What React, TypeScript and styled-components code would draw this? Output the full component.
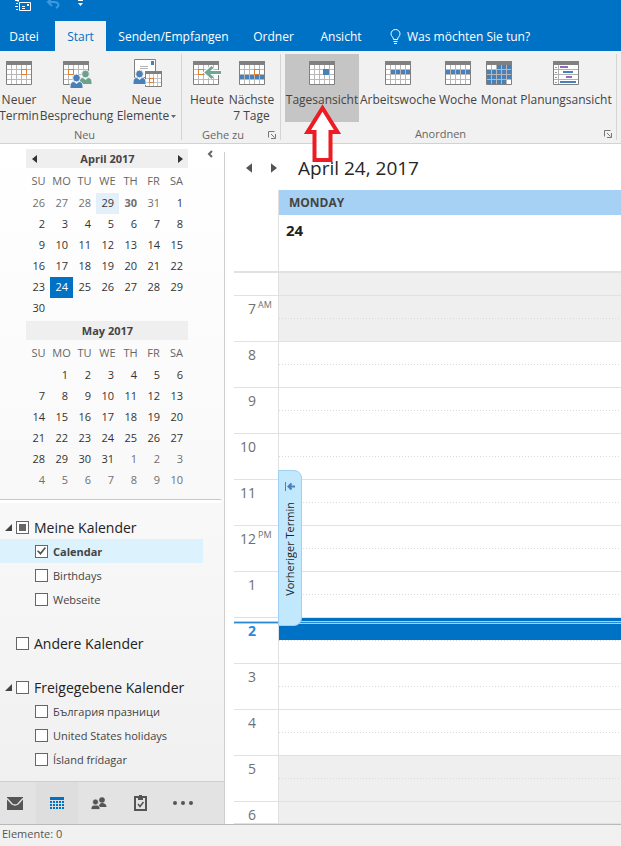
import React from "react";
import styled, { createGlobalStyle } from "styled-components";

const GlobalStyle = createGlobalStyle`
  * { box-sizing: border-box; }
  body { margin: 0; background: #fff; }
  body, button, input { font-family: "Open Sans", "Noto Sans", sans-serif; }
  button { border: 0; padding: 0; background: none; color: inherit; cursor: pointer; }
  svg { display: block; flex: none; }
`;

const line = "#e1e1e1";
const blue = "#0072c6";

/* ---------- Shell ---------- */

const Window = styled.div`
  position: relative;
  display: flex;
  flex-direction: column;
  height: 100vh;
  overflow: hidden;
  font-size: 12px;
  color: #444;
`;

const TitleBar = styled.header`
  flex: none;
  background: ${blue};
  color: #fff;
`;

const QuickAccess = styled.div`
  display: flex;
  gap: 14px;
  height: 21px;
  padding-left: 14px;
  overflow: hidden;
`;

const TabStrip = styled.nav`
  display: flex;
  height: 30px;
  white-space: nowrap;
`;

const Tab = styled.button<{ $active?: boolean; $width: number }>`
  flex: 0 0 ${(p) => p.$width}px;
  padding-right: 7px;
  padding-left: ${(p) => (p.$active ? 7 : 0)}px;
  font-size: 12px;
  text-align: center;
  color: ${(p) => (p.$active ? blue : "#fff")};
  background: ${(p) => (p.$active ? "#f1f1f1" : "transparent")};
  & ~ & { padding-left: 7px; }
`;

const TellMe = styled.button`
  display: flex;
  align-items: center;
  gap: 6px;
  padding-left: 14px;
  font-size: 12px;
`;

const Ribbon = styled.section`
  flex: none;
  display: flex;
  background: #f1f1f1;
  border-bottom: 1px solid #d2d2d2;
  height: 93px;
  padding: 3px 0;
  white-space: nowrap;
`;

const Group = styled.div<{ $width: number; $pad: number }>`
  flex: 0 0 ${(p) => p.$width}px;
  display: flex;
  flex-direction: column;
  border-right: 1px solid #d4d4d4;
  padding-left: ${(p) => p.$pad}px;
`;

const GroupButtons = styled.div`
  display: flex;
  height: 69px;
`;

const GroupFooter = styled.div`
  display: flex;
  align-items: center;
  justify-content: center;
  flex: 1;
  padding: 6px 4px 0 0;
  font-size: 11px;
  line-height: 12px;
  color: #666;
  > span { flex: 1; padding-right: 8px; text-align: center; }
`;

const BigButton = styled.button<{ $width: number; $active?: boolean }>`
  flex: 0 0 ${(p) => p.$width}px;
  min-width: 0;
  display: flex;
  flex-direction: column;
  align-items: center;
  padding-top: 4px;
  font-size: 12px;
  line-height: 16px;
  background: ${(p) => (p.$active ? "#c5c5c5" : "transparent")};
  svg { margin-bottom: 2px; }
  > span { display: flex; align-items: center; gap: 2px; justify-content: center; }
  > span > svg { margin: 0; }
`;

const Body = styled.div`
  flex: 1;
  display: flex;
  min-height: 0;
`;

const StatusBar = styled.footer`
  flex: none;
  height: 22px;
  border-top: 1px solid #b9b9b9;
  background: #f1f1f1;
  padding-left: 2px;
  font-size: 11px;
  line-height: 18px;
  color: #555;
`;

/* ---------- Sidebar ---------- */

const Sidebar = styled.aside`
  flex: 0 0 225px;
  display: flex;
  flex-direction: column;
  background: linear-gradient(#fff, #f8f8f8 56%, #efefef);
`;

const Months = styled.div`
  display: flex;
  padding: 5px 0 8px 26px;
  border-bottom: 1px solid #c8c8c8;
  box-shadow: 0 3px 0 #fff;
  margin-right: 4px;
`;

const MonthList = styled.div`
  flex: 0 0 162px;
  display: grid;
  gap: 2px;
`;

const CollapseButton = styled.button`
  margin-left: 19px;
  height: 10px;
`;

const MonthTitle = styled.div`
  display: flex;
  align-items: center;
  justify-content: space-between;
  height: 19px;
  padding: 0 5px 0 6px;
  background: #efefef;
  font-size: 11px;
  font-weight: 700;
  > span { flex: 1; text-align: center; }
`;

const MonthTable = styled.table`
  width: 161px;
  margin-left: 1px;
  table-layout: fixed;
  border-collapse: collapse;
  font-size: 11px;
  th { height: 25px; padding: 0; font-weight: 400; color: #666; text-align: center; line-height: 14px; }
`;

const DayCell = styled.td<{ $kind?: string }>`
  height: 21px;
  padding: 0 5px 2px 0;
  text-align: right;
  line-height: 14px;
  color: ${(p) => (p.$kind === "out" || p.$kind === "bold" ? "#707070" : p.$kind === "selected" ? "#fff" : "#333")};
  font-weight: ${(p) => (p.$kind === "bold" ? 700 : 400)};
  background: ${(p) => (p.$kind === "selected" ? blue : p.$kind === "today" ? "#e3f0fa" : "transparent")};
`;

const CalendarLists = styled.div`
  flex: 1;
  display: flex;
  flex-direction: column;
  gap: 20px;
  padding-top: 15px;
  min-height: 0;
  overflow: hidden;
`;

const ListTitle = styled.label`
  display: flex;
  align-items: center;
  height: 24px;
  padding-left: 5px;
  font-size: 14px;
  color: #222;
  input { margin-right: 5px; }
`;

const Twisty = styled.span`
  width: 11px;
`;

const ListItem = styled.label<{ $active?: boolean }>`
  display: flex;
  align-items: center;
  gap: 5px;
  height: 24px;
  margin-right: 22px;
  padding-left: 35px;
  font-size: 11px;
  font-weight: ${(p) => (p.$active ? 700 : 400)};
  background: ${(p) => (p.$active ? "#dcf2fd" : "transparent")};
`;

const CheckBox = styled.input`
  appearance: none;
  flex: none;
  display: grid;
  place-items: center;
  width: 13px;
  height: 13px;
  margin: 0;
  border: 1px solid #666;
  background: #fff;
  &[data-mixed="true"]::before {
    content: "";
    width: 7px;
    height: 7px;
    background: #666;
  }
  &:checked::before {
    content: "";
    width: 9px;
    height: 8px;
    background: #555;
    clip-path: polygon(0 52%, 14% 40%, 38% 66%, 86% 0, 100% 12%, 40% 100%);
  }
`;

const Modules = styled.nav`
  flex: none;
  display: flex;
  height: 43px;
  border-top: 1px solid #cfcfcf;
  background: #e3e3e3;
`;

const ModuleButton = styled.button<{ $active?: boolean; $width: number; $inset?: number }>`
  flex: 0 0 ${(p) => p.$width}px;
  display: flex;
  align-items: center;
  justify-content: center;
  padding-right: ${(p) => p.$inset ?? 0}px;
  background: ${(p) => (p.$active ? "#dedede" : "transparent")};
`;

/* ---------- Day view ---------- */

const Main = styled.main`
  flex: 1;
  min-width: 0;
  display: flex;
  flex-direction: column;
  margin-top: 8px;
  padding-left: 9px;
  border-left: 1px solid #cfcfcf;
  margin-left: -1px;
  background: #fff;
`;

const DateBar = styled.div`
  flex: none;
  display: flex;
  align-items: center;
  height: 38px;
  padding: 0 0 6px 12px;
  gap: 19px;
`;

const DateTitle = styled.h1`
  margin: 0 0 0 2px;
  font-size: 19px;
  font-weight: 400;
  line-height: 28px;
  color: #262626;
`;

const DayHeader = styled.div`
  flex: none;
  margin-left: 44px;
  border-left: 1px solid ${line};
`;

const WeekdayName = styled.div`
  height: 25px;
  padding-left: 10px;
  background: #a6d1f4;
  font-size: 12px;
  font-weight: 700;
  line-height: 25px;
`;

const DayNumber = styled.div`
  height: 56px;
  padding: 5px 7px;
  font-size: 15px;
  font-weight: 700;
  line-height: 20px;
  color: #222;
`;

const Hours = styled.div`
  position: relative;
  flex: 1;
  min-height: 0;
  overflow: hidden;
  border-bottom: 1px solid ${line};
`;

const HourRow = styled.div<{ $half?: boolean }>`
  display: grid;
  grid-template-columns: 44px 1fr;
  height: ${(p) => (p.$half ? 24 : 46)}px;
  border-top: ${(p) => (p.$half ? 2 : 1)}px solid ${line};
`;

const HourLabel = styled.div<{ $now?: boolean }>`
  display: grid;
  grid-template-columns: 22px 1fr;
  gap: 2px;
  text-align: right;
  padding-top: 3px;
  font-size: 14px;
  line-height: 20px;
  font-weight: ${(p) => (p.$now ? 700 : 400)};
  color: ${(p) => (p.$now ? "#2a8ad4" : "#707070")};
  sup { font-size: 9px; line-height: 12px; text-align: left; vertical-align: top; }
`;

const HourSlots = styled.div<{ $off?: boolean }>`
  border-left: 1px solid ${line};
  background: ${(p) => (p.$off ? "#efefef" : "#fff")};
`;

const Slot = styled.div<{ $selected?: boolean }>`
  height: 22px;
  background: ${(p) => (p.$selected ? blue : "transparent")};
`;

const HalfHour = styled.div`
  height: 1px;
  background: repeating-linear-gradient(90deg, #dadada 0 1px, transparent 1px 3px);
`;

const NowLine = styled.div`
  position: absolute;
  left: 0;
  right: 0;
  top: 350px;
  height: 3px;
  background: #2a8ad4;
  border-top: 1px solid #a3d0f3;
  border-bottom: 1px solid #a3d0f3;
`;

const PreviousButton = styled.button`
  position: absolute;
  left: 44px;
  top: 199px;
  display: flex;
  flex-direction: column;
  align-items: center;
  gap: 11px;
  width: 24px;
  height: 156px;
  padding-top: 11px;
  border: 1px solid #a0cff2;
  border-radius: 0 8px 8px 0;
  background: #c1e8fd;
  color: #222;
  font-size: 11px;
  line-height: 14px;
  > span { writing-mode: vertical-rl; transform: rotate(180deg); white-space: nowrap; }
`;

const Pointer = styled.svg`
  position: absolute;
  left: 303px;
  top: 102px;
`;

/* ---------- Icons ---------- */

type GridIconProps = { children?: React.ReactNode; width?: number };

const Grid = ({ children }: { children?: React.ReactNode }) => (
  <g>
    <path d="M.5 .5h25v23H.5z" fill="#fff" stroke="#808080" />
    <path d="M5.5 4v19M10.500 4v19M15.500 4v19M20.500 4v19M1 8.500h24M1 13.500h24M1 18.500h24" stroke="#b8b8b8" />
    <path d="M0 0h26v4H0z" fill="#808080" />
    {children}
  </g>
);

const GridIcon = ({ children, width = 26 }: GridIconProps) => (
  <svg width={width} height="32" viewBox={`0 0 ${width} 32`}>
    <g transform="translate(0 3)"><Grid>{children}</Grid></g>
  </svg>
);

const OrangeDay = ({ x, y }: { x: number; y: number }) => (
  <rect x={x + 0.5} y={y + 0.5} width="5" height="5" fill="#fff" stroke="#e08030" />
);

const Person = ({ x, y, color }: { x: number; y: number; color: string }) => (
  <g transform={`translate(${x} ${y})`} fill={color} stroke="#f1f1f1" strokeWidth="1">
    <path d="M0 14.500V12c0-3 2-4.500 4-4.500l2.500 2 2.500-2c2 0 4 1.500 4 4.500v2.500z" />
    <circle cx="6.500" cy="4" r="3.900" />
  </g>
);

const MeetingIcon = () => (
  <svg width="30" height="32" viewBox="0 0 30 32">
    <g transform="translate(1 3)"><Grid><OrangeDay x={5} y={8} /></Grid></g>
    <Person x={17} y={12} color="#6aa28c" />
    <Person x={8} y={16} color="#4a80b8" />
  </svg>
);

const ItemsIcon = () => (
  <svg width="30" height="32" viewBox="0 0 30 32">
    <path d="M2.500 1.500h21v18h-21z" fill="#fff" stroke="#808080" />
    <path d="M19 3h3v4h-3z" fill="#4a80b8" />
    <path d="M8 8.500h8M8 10.500h8" stroke="#b8b8b8" />
    <path d="M13.500 14.500h16v14h-16z" fill="#fff" stroke="#808080" />
    <path d="M17.500 16v12M21.500 16v12M25.500 16v12M14 20.500h15M14 24.500h15" stroke="#c4c4c4" />
    <path d="M13 13h17v3H13z" fill="#808080" />
    <rect x="17.500" y="20.500" width="4" height="4" fill="#fff" stroke="#e08030" />
    <Person x={1} y={12} color="#4a80b8" />
  </svg>
);

const Squares = ({ y, from, to }: { y: number; from: number; to: number }) => (
  <>
    {Array.from({ length: to - from }, (_, i) => (
      <rect key={i} x={1 + (from + i) * 5} y={y} width="4" height="4" fill="#4a80b8" />
    ))}
  </>
);

const PlanIcon = () => (
  <svg width="26" height="32" viewBox="0 0 26 32">
    <path d="M.5 3.500h25v23H.5z" fill="#fff" stroke="#808080" />
    <path d="M1 11.500h24M1 16.500h24M1 21.500h24M5.500 7v19" stroke="#b0b0b0" />
    <path d="M2 9.500h2M2 14.500h2M2 19.500h2M2 24.500h2" stroke="#999" />
    <path d="M0 3h26v4H0z" fill="#808080" />
    <path d="M7 9h8M13 19h6" stroke="#9668bd" strokeWidth="2" />
    <path d="M10 14h10M7 24h16" stroke="#4a80b8" strokeWidth="2" />
  </svg>
);

const LauncherIcon = () => (
  <svg width="8" height="8" viewBox="0 0 8 8" fill="none" stroke="#777">
    <path d="M.5 6.500v-6h6M3 3l3.500 3.500M7.500 3v4.500H3" />
  </svg>
);

const Triangle = ({ left, size = 8, color = "#333" }: { left?: boolean; size?: number; color?: string }) => (
  <svg width={size / 2 + 1} height={size} viewBox="0 0 5 8" fill={color}>
    <path d={left ? "M5 0v8L0 4z" : "M0 0v8l5-4z"} />
  </svg>
);

/* ---------- Data ---------- */

const weekdays = ["SU", "MO", "TU", "WE", "TH", "FR", "SA"];

const april = [
  [26, 27, 28, 29, 30, 31, 1],
  [2, 3, 4, 5, 6, 7, 8],
  [9, 10, 11, 12, 13, 14, 15],
  [16, 17, 18, 19, 20, 21, 22],
  [23, 24, 25, 26, 27, 28, 29],
  [30],
];
const may = [
  [0, 1, 2, 3, 4, 5, 6],
  [7, 8, 9, 10, 11, 12, 13],
  [14, 15, 16, 17, 18, 19, 20],
  [21, 22, 23, 24, 25, 26, 27],
  [28, 29, 30, 31, 1, 2, 3],
  [4, 5, 6, 7, 8, 9, 10],
];

const aprilKind = (d: number, week: number) => {
  if (week === 0 && d === 29) return "today";
  if (week === 0 && d === 30) return "bold";
  if (week === 0 && d > 20) return "out";
  return d === 24 ? "selected" : undefined;
};
const mayKind = (d: number, week: number) => (week > 3 && d < 20 ? "out" : undefined);

const hours = [
  { label: "7", suffix: "AM", off: true },
  { label: "8" },
  { label: "9" },
  { label: "10" },
  { label: "11" },
  { label: "12", suffix: "PM" },
  { label: "1" },
  { label: "2", now: true },
  { label: "3" },
  { label: "4" },
  { label: "5", off: true },
  { label: "6", off: true },
];

type MonthProps = {
  title: string;
  weeks: number[][];
  kind: (d: number, week: number) => string | undefined;
  arrows?: boolean;
};

const Month = ({ title, weeks, kind, arrows }: MonthProps) => (
  <div>
    <MonthTitle>
      {arrows && <button aria-label="Previous month"><Triangle left /></button>}
      <span>{title}</span>
      {arrows && <button aria-label="Next month"><Triangle /></button>}
    </MonthTitle>
    <MonthTable>
      <thead>
        <tr>{weekdays.map((d) => <th key={d}>{d}</th>)}</tr>
      </thead>
      <tbody>
        {weeks.map((week, w) => (
          <tr key={w}>
            {weekdays.map((_, i) => (
              <DayCell key={i} $kind={week[i] ? kind(week[i], w) : undefined}>{week[i] || ""}</DayCell>
            ))}
          </tr>
        ))}
      </tbody>
    </MonthTable>
  </div>
);

type ListProps = { title: string; items?: string[]; active?: string; mixed?: boolean };

const CalendarList = ({ title, items = [], active, mixed }: ListProps) => (
  <div>
    <ListTitle>
      <Twisty>
        {items.length > 0 && (
          <svg width="7" height="7" viewBox="0 0 7 7" fill="#444"><path d="M7 0v7H0z" /></svg>
        )}
      </Twisty>
      <CheckBox type="checkbox" data-mixed={!!mixed} />
      {title}
    </ListTitle>
    {items.map((item) => (
      <ListItem key={item} $active={item === active}>
        <CheckBox type="checkbox" defaultChecked={item === active} />
        {item}
      </ListItem>
    ))}
  </div>
);

export default function App() {
  return (
    <Window>
      <GlobalStyle />
      <TitleBar>
        <QuickAccess>
          <svg width="18" height="12" viewBox="0 0 18 12" fill="none" stroke="#fff">
            <path d="M5.500 2.500h11v8h-11zM1 .5h4M2 3.500h2M1 6.500h3M2 9.500h2M8 6.500h3M8 8.500h3M4 0v2" />
            <path d="M13 4h2v2h-2z" fill="#fff" stroke="none" />
          </svg>
          <svg width="16" height="12" viewBox="0 0 16 12" fill="none" stroke="#3f98dc" strokeWidth="2">
            <path d="M6 -2 2 2l4 4M2 2h6c5 0 6 4 2 6" />
          </svg>
          <svg width="8" height="12" viewBox="0 0 8 12" fill="#fff">
            <path d="M2 0h5v1H2zM2 3h5L4.500 6z" />
          </svg>
        </QuickAccess>
        <TabStrip>
          <Tab $width={55}>Datei</Tab>
          <Tab $width={51} $active>Start</Tab>
          <Tab $width={135}>Senden/Empfangen</Tab>
          <Tab $width={65}>Ordner</Tab>
          <Tab $width={70}>Ansicht</Tab>
          <TellMe>
            <svg width="11" height="15" viewBox="0 0 11 15" fill="none" stroke="#fff">
              <path d="M3.500 10.500C3.500 8 1 7.500 1 4.800a4.500 4.300 0 0 1 9 0C10 7.500 7.500 8 7.500 10.500zM3.500 12.500h4M4 14.500h3" />
            </svg>
            Was möchten Sie tun?
          </TellMe>
        </TabStrip>
      </TitleBar>

      <Ribbon>
        <Group $width={182} $pad={0}>
          <GroupButtons>
            <BigButton $width={38}><GridIcon><OrangeDay x={15} y={8} /></GridIcon><span>Neuer</span><span>Termin</span></BigButton>
            <BigButton $width={77}><MeetingIcon /><span>Neue</span><span>Besprechung</span></BigButton>
            <BigButton $width={63}>
              <ItemsIcon /><span>Neue</span>
              <span>Elemente<svg width="5" height="3" viewBox="0 0 5 3" fill="#666"><path d="M0 0h5L2.500 3z" /></svg></span>
            </BigButton>
          </GroupButtons>
          <GroupFooter><span>Neu</span></GroupFooter>
        </Group>
        <Group $width={99} $pad={4}>
          <GroupButtons>
            <BigButton $width={42}>
              <GridIcon width={28}>
                <OrangeDay x={5} y={8} />
                <path d="M28 11.500H14M19.500 6l-6 5.500 6 5.500" fill="none" stroke="#fff" strokeWidth="5" />
                <path d="M28 11.500H14M19.500 6l-6 5.500 6 5.500" fill="none" stroke="#6fa792" strokeWidth="3" />
              </GridIcon>
              <span>Heute</span>
            </BigButton>
            <BigButton $width={47}>
              <GridIcon><Squares y={14} from={0} to={5} /><OrangeDay x={15} y={8} /></GridIcon>
              <span>Nächste</span><span>7 Tage</span>
            </BigButton>
          </GroupButtons>
          <GroupFooter><span>Gehe zu</span><button aria-label="Gehe zu Optionen"><LauncherIcon /></button></GroupFooter>
        </Group>
        <Group $width={336} $pad={4}>
          <GroupButtons>
            <BigButton $width={74} $active><GridIcon><rect x="14" y="8" width="6" height="6" fill="#4a80b8" /></GridIcon><span>Tagesansicht</span></BigButton>
            <BigButton $width={78}><GridIcon><Squares y={9} from={1} to={5} /></GridIcon><span>Arbeitswoche</span></BigButton>
            <BigButton $width={42}><GridIcon><Squares y={9} from={0} to={5} /></GridIcon><span>Woche</span></BigButton>
            <BigButton $width={40}>
              <GridIcon><Squares y={4} from={2} to={5} /><Squares y={9} from={0} to={5} /><Squares y={14} from={0} to={5} /><Squares y={19} from={0} to={4} /></GridIcon>
              <span>Monat</span>
            </BigButton>
            <BigButton $width={94}><PlanIcon /><span>Planungsansicht</span></BigButton>
          </GroupButtons>
          <GroupFooter><span>Anordnen</span><button aria-label="Anordnen Optionen"><LauncherIcon /></button></GroupFooter>
        </Group>
      </Ribbon>

      <Body>
        <Sidebar>
          <Months>
            <MonthList>
              <Month title="April 2017" weeks={april} kind={aprilKind} arrows />
              <Month title="May 2017" weeks={may} kind={mayKind} />
            </MonthList>
            <CollapseButton aria-label="Collapse">
              <svg width="6" height="8" viewBox="0 0 6 8" fill="none" stroke="#666" strokeWidth="2"><path d="M5 1 2 4l3 3" /></svg>
            </CollapseButton>
          </Months>
          <CalendarLists>
            <CalendarList title="Meine Kalender" items={["Calendar", "Birthdays", "Webseite"]} active="Calendar" mixed />
            <CalendarList title="Andere Kalender" />
            <CalendarList title="Freigegebene Kalender" items={["България празници", "United States holidays", "Ísland frídagar"]} />
          </CalendarLists>
          <Modules>
            <ModuleButton $width={36} $inset={6} aria-label="Mail">
              <svg width="16" height="13" viewBox="0 0 16 13"><path d="M0 0h16v13H0z" fill="#555" /><path d="M0 1.500 5 7q3 2 6 0l5-5.500" fill="none" stroke="#e3e3e3" strokeWidth="1.500" /></svg>
            </ModuleButton>
            <ModuleButton $width={42} $active aria-label="Calendar">
              <svg width="14" height="13" viewBox="0 0 14 13" fill={blue}>
                <path d="M0 0h14v3H0z" />
                <path d="M0 5h14M0 8h14M0 11h14" stroke={blue} strokeWidth="2" strokeDasharray="2 1" />
              </svg>
            </ModuleButton>
            <ModuleButton $width={41} aria-label="People">
              <svg width="16" height="13" viewBox="0 0 16 13" fill="#555">
                <circle cx="11" cy="3" r="2.800" /><path d="M8 10c0-3 1-4 3-4s4.500 1 4.500 4z" />
                <g stroke="#e3e3e3" strokeWidth=".8"><path d="M0 12.500C0 9 1.500 8 4.500 8S9 9 9 12.500z" /><circle cx="4.500" cy="5" r="3" /></g>
              </svg>
            </ModuleButton>
            <ModuleButton $width={42} aria-label="Tasks">
              <svg width="13" height="16" viewBox="0 0 13 16" fill="none" stroke="#555" strokeWidth="2">
                <path d="M1 2h11v13H1z" /><path d="M4 3.500h5M6.500 0v3" strokeWidth="3" /><path d="m4 9 2 2.500L9.500 7" strokeWidth="1.500" />
              </svg>
            </ModuleButton>
            <ModuleButton $width={44} aria-label="More">
              <svg width="20" height="4" viewBox="0 0 20 4" fill="#555"><circle cx="2" cy="2" r="2" /><circle cx="10" cy="2" r="2" /><circle cx="18" cy="2" r="2" /></svg>
            </ModuleButton>
          </Modules>
        </Sidebar>

        <Main>
          <DateBar>
            <button aria-label="Previous day"><Triangle left size={10} color="#555" /></button>
            <button aria-label="Next day"><Triangle size={10} color="#555" /></button>
            <DateTitle>April 24, 2017</DateTitle>
          </DateBar>
          <DayHeader>
            <WeekdayName>MONDAY</WeekdayName>
            <DayNumber>24</DayNumber>
          </DayHeader>
          <Hours>
            <HourRow $half><span /><HourSlots $off /></HourRow>
            {hours.map((h) => (
              <HourRow key={h.label}>
                <HourLabel $now={h.now}><span>{h.label}</span>{h.suffix && <sup>{h.suffix}</sup>}</HourLabel>
                <HourSlots $off={h.off}><Slot $selected={h.now} /><HalfHour /></HourSlots>
              </HourRow>
            ))}
            <NowLine />
            <PreviousButton>
              <svg width="10" height="9" viewBox="0 0 10 9" fill="none" stroke="#4a80b8"><path d="M.5 0v9" /><path d="M10 4.500H4M6.500 1.500l-3 3 3 3" strokeWidth="2" /></svg>
              <span>Vorheriger Termin</span>
            </PreviousButton>
          </Hours>
        </Main>
      </Body>
      <StatusBar>Elemente: 0</StatusBar>

      <Pointer width="40" height="62" viewBox="0 0 40 62" aria-hidden="true">
        <path d="M19.500 6 4.500 30h7v28h16V30h7z" fill="#fff" stroke="#ed1c24" strokeWidth="4" />
      </Pointer>
    </Window>
  );
}
